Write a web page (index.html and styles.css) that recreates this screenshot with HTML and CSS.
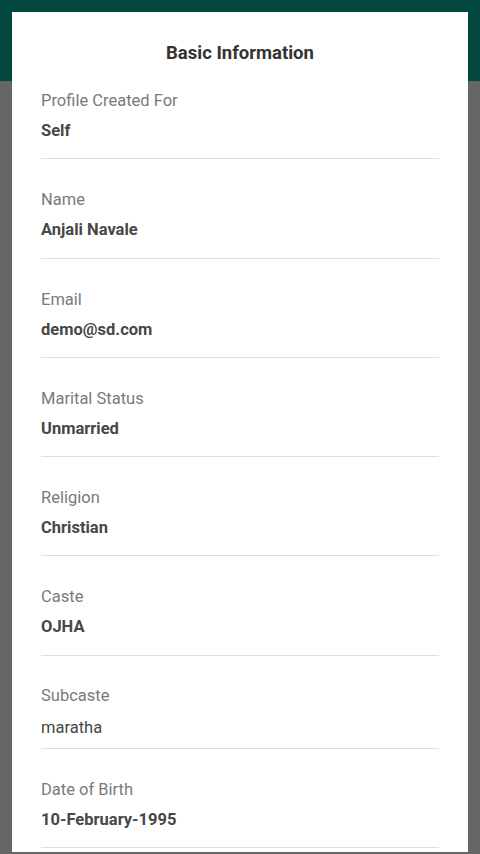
FILE: index.html
```html
<!DOCTYPE html>
<html lang="en">
<head>
  <meta charset="utf-8">
  <meta name="viewport" content="width=device-width, initial-scale=1">
  <title>Basic Information</title>
  <link rel="stylesheet" href="styles.css">
</head>
<body>

  <div class="screen">
    <div class="appBar"></div>
    <div class="backdrop"></div>

    <div class="dialog">
      <h2 class="dialogTitle">Basic Information</h2>

      <div class="infoRow">
        <div class="infoLabel">Profile Created For</div>
        <div class="infoValue">Self</div>
      </div>
      <div class="infoRow">
        <div class="infoLabel">Name</div>
        <div class="infoValue">Anjali Navale</div>
      </div>
      <div class="infoRow">
        <div class="infoLabel">Email</div>
        <div class="infoValue">demo@sd.com</div>
      </div>
      <div class="infoRow">
        <div class="infoLabel">Marital Status</div>
        <div class="infoValue">Unmarried</div>
      </div>
      <div class="infoRow">
        <div class="infoLabel">Religion</div>
        <div class="infoValue">Christian</div>
      </div>
      <div class="infoRow">
        <div class="infoLabel">Caste</div>
        <div class="infoValue">OJHA</div>
      </div>
      <div class="infoRow infoRowPlain">
        <div class="infoLabel">Subcaste</div>
        <div class="infoValue">maratha</div>
      </div>
      <div class="infoRow">
        <div class="infoLabel">Date of Birth</div>
        <div class="infoValue">10-February-1995</div>
      </div>
    </div>
  </div>

</body>
</html>
```

FILE: styles.css
```css
html, body {
  margin: 0;
  padding: 0;
  height: 100%;
  overflow: hidden;
}

body {
  background: #666666;
  font-family: Roboto, "Noto Sans", "Liberation Sans", sans-serif;
}

.screen {
  position: relative;
  height: 854px;
}

.appBar {
  height: 81px;
  background: #03483f;
}

.backdrop {
  height: 773px;
  background: #666666;
}

/* dialog sits over the dimmed page */
.dialog {
  position: absolute;
  top: 12px;
  left: 12px;
  right: 12px;
  bottom: 2px;
  overflow: hidden;
  background: #ffffff;
  padding: 33px 29px 0 29px;
  box-sizing: border-box;
}

.dialogTitle {
  margin: 0 0 -2px 0;
  font-size: 18.5px;
  line-height: 17px;
  font-weight: 700;
  color: #333333;
  text-align: center;
}

.infoRow {
  padding: 31px 0 17.3px 0;
  border-bottom: 1px solid #dedede;
}

.infoLabel {
  font-size: 16.5px;
  line-height: 20px;
  color: #7a7a7a;
}

.infoValue {
  margin-top: 10px;
  font-size: 16.5px;
  line-height: 20px;
  font-weight: 700;
  color: #474747;
}

.infoRowPlain {
  padding-top: 30px;
  padding-bottom: 10px;
}

.infoRowPlain .infoValue {
  margin-top: 12px;
  font-weight: 400;
}
```
